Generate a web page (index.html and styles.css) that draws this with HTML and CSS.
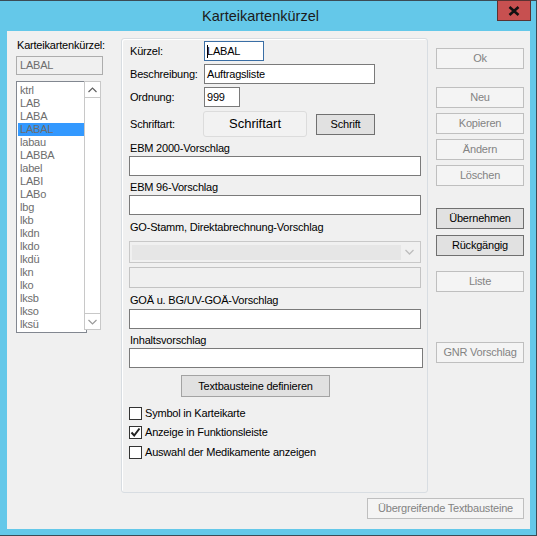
FILE: index.html
```html
<!DOCTYPE html>
<html>
<head>
<meta charset="utf-8">
<link rel="stylesheet" href="styles.css">
</head>
<body>
<div class="window">
  <div class="titlebar"><div class="title">Karteikartenkürzel</div></div>
  <div class="close"><svg width="12" height="10" viewBox="0 0 12 10"><path d="M1.5 1 L10.5 9 M10.5 1 L1.5 9" stroke="#111" stroke-width="2.6" fill="none"/></svg></div>
  <div class="client">
    <div class="main">
      <div class="leftcol">
        <div class="lbl">Karteikartenkürzel:</div>
        <div class="rofield">LABAL</div>
        <div class="listwrap">
          <div class="list">
            <div class="item">ktrl</div>
            <div class="item">LAB</div>
            <div class="item">LABA</div>
            <div class="item sel">LABAL</div>
            <div class="item">labau</div>
            <div class="item">LABBA</div>
            <div class="item">label</div>
            <div class="item">LABI</div>
            <div class="item">LABo</div>
            <div class="item">lbg</div>
            <div class="item">lkb</div>
            <div class="item">lkdn</div>
            <div class="item">lkdo</div>
            <div class="item">lkdü</div>
            <div class="item">lkn</div>
            <div class="item">lko</div>
            <div class="item">lksb</div>
            <div class="item">lkso</div>
            <div class="item">lksü</div>
          </div>
          <div class="vscroll">
            <div class="sbtn up"><svg width="9" height="6" viewBox="0 0 9 6"><path d="M0.5 5 L4.5 1 L8.5 5" stroke="#606060" stroke-width="1.2" fill="none"/></svg></div>
            <div class="sbtn down"><svg width="9" height="6" viewBox="0 0 9 6"><path d="M0.5 1 L4.5 5 L8.5 1" stroke="#9a9a9a" stroke-width="1.2" fill="none"/></svg></div>
          </div>
        </div>
      </div>

      <div class="panel">
        <div class="row r1">
          <div class="rlabel">Kürzel:</div>
          <div class="field focus kurz"><span class="caret"></span>LABAL</div>
        </div>
        <div class="row r2">
          <div class="rlabel">Beschreibung:</div>
          <div class="field besch">Auftragsliste</div>
        </div>
        <div class="row r3">
          <div class="rlabel">Ordnung:</div>
          <div class="field ord">999</div>
        </div>
        <div class="row r4">
          <div class="rlabel">Schriftart:</div>
          <div class="fontbtn">Schriftart</div>
          <div class="btn en schrift">Schrift</div>
        </div>
        <div class="plabel l1">EBM 2000-Vorschlag</div>
        <div class="field wide i1"></div>
        <div class="plabel l2">EBM 96-Vorschlag</div>
        <div class="field wide i2"></div>
        <div class="plabel l3">GO-Stamm, Direktabrechnung-Vorschlag</div>
        <div class="select">
          <div class="selinner"></div>
          <svg width="9" height="6" viewBox="0 0 9 6"><path d="M0.5 1 L4.5 5 L8.5 1" stroke="#bdbdbd" stroke-width="1.3" fill="none"/></svg>
        </div>
        <div class="field disabled"></div>
        <div class="plabel l4">GOÄ u. BG/UV-GOÄ-Vorschlag</div>
        <div class="field wide i4"></div>
        <div class="plabel l5">Inhaltsvorschlag</div>
        <div class="field wider i5"></div>
        <div class="btn en tb">Textbausteine definieren</div>
        <div class="cbrow c1"><span class="cb"></span>Symbol in Karteikarte</div>
        <div class="cbrow c2"><span class="cb"><svg width="11" height="11" viewBox="0 0 11 11"><path d="M1.5 5.5 L4.2 8.5 L9.5 1.5" stroke="#222" stroke-width="2" fill="none"/></svg></span>Anzeige in Funktionsleiste</div>
        <div class="cbrow c3"><span class="cb"></span>Auswahl der Medikamente anzeigen</div>
      </div>

      <div class="rightcol">
        <div class="btn dis b-ok">Ok</div>
        <div class="btn dis b-neu">Neu</div>
        <div class="btn dis b-s5">Kopieren</div>
        <div class="btn dis b-s5">Ändern</div>
        <div class="btn dis b-s5">Löschen</div>
        <div class="btn en b-ueb">Übernehmen</div>
        <div class="btn en b-rue">Rückgängig</div>
        <div class="btn dis b-liste">Liste</div>
        <div class="btn dis b-gnr">GNR Vorschlag</div>
      </div>
    </div>
    <div class="bottom">
      <div class="btn dis b-ueg">Übergreifende Textbausteine</div>
    </div>
  </div>
</div>
</body>
</html>
```
FILE: styles.css
```css
* { box-sizing: border-box; }
html, body { margin: 0; padding: 0; }
body {
  width: 537px;
  height: 536px;
  overflow: hidden;
  font-family: "Liberation Sans", Arial, sans-serif;
  font-size: 11px;
  letter-spacing: -0.2px;
  color: #000;
  background: #64c8e9;
}
.window {
  position: relative;
  width: 537px;
  height: 536px;
  background: #64c8e9;
  border-top: 1px solid #3b4b55;
  border-right: 1px solid #3b4b55;
  border-bottom: 1px solid #3b4b55;
  padding: 0 6px 6px 7px;
  display: flex;
  flex-direction: column;
}
.titlebar {
  height: 30px;
  display: flex;
  align-items: center;
  justify-content: center;
  padding-right: 16px;
}
.title {
  font-size: 14.5px;
  letter-spacing: 0;
  color: #1b1b1b;
  line-height: 18px;
}
.close {
  position: absolute;
  top: -1px;
  right: 5px;
  width: 34px;
  height: 21px;
  background: #c75050;
  border: 1px solid #5a3232;
  display: flex;
  align-items: center;
  justify-content: center;
}
.client {
  height: 498px;
  background: #f0f0f0;
  padding: 0 6px 0 9px;
  display: flex;
  flex-direction: column;
}
.main {
  display: flex;
  align-items: flex-start;
}
.leftcol {
  width: 88px;
  margin-top: 8px;
  display: flex;
  flex-direction: column;
}
.lbl {
  height: 13px;
  line-height: 13px;
  padding-left: 1px;
  white-space: nowrap;
}
.rofield {
  margin-top: 4px;
  width: 87px;
  height: 19px;
  border: 1px solid #adadad;
  background: #f0f0f0;
  color: #6d6d6d;
  line-height: 17px;
  padding-left: 3px;
}
.listwrap {
  margin-top: 6px;
  display: flex;
  align-items: flex-start;
}
.list {
  width: 71px;
  height: 252px;
  border: 1px solid #828790;
  background: #fff;
  padding-top: 2px;
}
.item {
  height: 13px;
  line-height: 13px;
  margin: 0 1px;
  padding-left: 2px;
  color: #6d6d6d;
  white-space: nowrap;
}
.item.sel {
  background: #3399ff;
  color: #6d6d6d;
}
.vscroll {
  width: 17px;
  height: 249px;
  margin-left: -3px;
  border: 1px solid #c8c8c8;
  background: #fff;
  display: flex;
  flex-direction: column;
  justify-content: space-between;
}
.sbtn {
  height: 16px;
  display: flex;
  align-items: center;
  justify-content: center;
}
.sbtn.up { border-bottom: 1px solid #c8c8c8; }
.sbtn.down { border-top: 1px solid #c8c8c8; }

.panel {
  width: 307px;
  height: 455px;
  margin: 7px 8px 0 17px;
  border: 1px solid #d8dde2;
  border-radius: 3px;
  box-shadow: inset 1px 1px 0 #fff;
  padding-left: 7px;
  display: flex;
  flex-direction: column;
  align-items: flex-start;
}
.row {
  display: flex;
  align-items: center;
}
.rlabel {
  width: 75px;
  padding-left: 1px;
  white-space: nowrap;
}
.r1 { margin-top: 2px; }
.r2, .r3 { margin-top: 3px; }
.r4 { margin-top: 4px; height: 26px; }
.field {
  height: 20px;
  border: 1px solid #7a7a7a;
  background: #fff;
  line-height: 18px;
  padding-left: 2px;
  white-space: nowrap;
}
.field.focus {
  border-color: #3a6ea5;
  display: flex;
  align-items: center;
  padding-left: 2px;
}
.caret {
  width: 1px;
  height: 13px;
  background: #000;
  margin-right: -1px;
}
.kurz { width: 60px; }
.besch { width: 171px; }
.ord { width: 36px; }
.fontbtn {
  width: 104px;
  height: 26px;
  border: 1px solid #dcdcdc;
  border-radius: 3px;
  background: #f2f2f2;
  font-size: 13px;
  letter-spacing: 0;
  line-height: 24px;
  text-align: center;
  margin-left: -1px;
}
.btn {
  height: 21px;
  line-height: 19px;
  text-align: center;
  white-space: nowrap;
  border: 1px solid;
}
.btn.en {
  background: #e1e1e1;
  border-color: #707070;
  color: #000;
}
.btn.dis {
  background: #f4f4f4;
  border-color: #bfbfbf;
  color: #838383;
}
.schrift { width: 59px; margin-left: 9px; }
.plabel {
  height: 13px;
  line-height: 13px;
  padding-left: 1px;
  white-space: nowrap;
}
.l1 { margin-top: 5px; }
.l2 { margin-top: 5px; }
.l3 { margin-top: 6px; }
.l4 { margin-top: 6px; }
.l5 { margin-top: 5px; }
.wide { width: 292px; }
.wider { width: 294px; }
.i1, .i2 { margin-top: 1px; }
.i4 { margin-top: 2px; }
.i5 { margin-top: 1px; }
.select {
  margin-top: 7px;
  width: 292px;
  height: 22px;
  border: 1px solid #c8c8c8;
  background: #f0f0f0;
  display: flex;
  align-items: center;
  padding: 0 6px 0 2px;
  justify-content: space-between;
}
.selinner {
  width: 269px;
  height: 15px;
  background: #e6e6e6;
}
.field.disabled {
  margin-top: 4px;
  width: 292px;
  height: 21px;
  border-color: #c3c3c3;
  background: #f0f0f0;
}
.tb {
  margin-top: 7px;
  margin-left: 52px;
  width: 149px;
  height: 22px;
  line-height: 20px;
  border-color: #a3a3a3 !important;
  font-size: 11px;
}
.cbrow {
  display: flex;
  align-items: center;
  height: 13px;
  line-height: 13px;
  white-space: nowrap;
}
.cb {
  width: 13px;
  height: 13px;
  border: 1px solid #333;
  background: #fff;
  margin-right: 3px;
  display: flex;
  align-items: center;
  justify-content: center;
}
.c1 { margin-top: 10px; }
.c2 { margin-top: 6px; }
.c3 { margin-top: 7px; }

.rightcol {
  width: 88px;
  margin-top: 17px;
  display: flex;
  flex-direction: column;
}
.rightcol .btn { width: 88px; }
.b-neu { margin-top: 18px; }
.b-s5 { margin-top: 5px; }
.b-ueb { margin-top: 22px; }
.b-rue { margin-top: 6px; }
.b-liste { margin-top: 15px; }
.b-gnr { margin-top: 50px; }
.bottom {
  display: flex;
  justify-content: flex-end;
}
.b-ueg {
  margin-top: 5px;
  width: 157px;
}
```
